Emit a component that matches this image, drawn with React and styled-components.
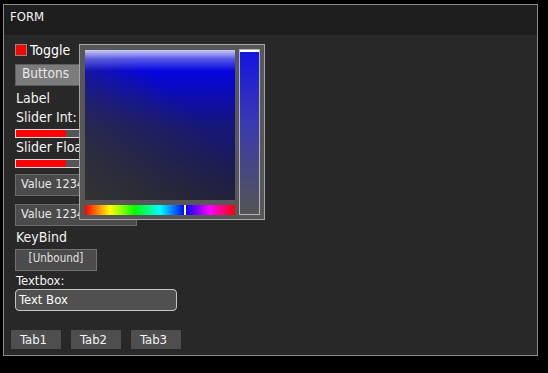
import React from 'react';
import styled, { createGlobalStyle } from 'styled-components';

const GlobalStyle = createGlobalStyle`
  html, body {
    margin: 0;
    background: #000;
  }
  body {
    font-family: "DejaVu Sans Condensed", "DejaVu Sans", sans-serif;
    font-stretch: condensed;
    color: #f0f0f0;
  }
`;

const Window = styled.div`
  position: relative;
  margin: 4px 0 0 3px;
  width: 535px;
  height: 352px;
  box-sizing: border-box;
  border: 1px solid #8c8c8c;
  background: #282828;
  display: flex;
  flex-direction: column;
`;

const TitleBar = styled.div`
  height: 30px;
  line-height: 24px;
  padding-left: 6px;
  background: #1e1e1e;
  font-size: 13px;
  color: #f4f4f4;
`;

const Body = styled.div`
  flex: 1;
  display: flex;
  flex-direction: column;
`;

const Form = styled.div`
  padding: 9px 11px 0;
  display: flex;
  flex-direction: column;
  align-items: flex-start;
`;

const ToggleRow = styled.label`
  display: flex;
  align-items: center;
  gap: 3px;
  height: 12px;
  font-size: 14px;
  line-height: 16px;
  color: #fff;
`;

const Check = styled.span`
  width: 12px;
  height: 12px;
  box-sizing: border-box;
  border: 1px solid #8a8a8a;
  background: ${(p) => (p.on ? '#ff0000' : 'transparent')};
`;

const Button = styled.div`
  margin-top: 8px;
  width: 110px;
  height: 22px;
  box-sizing: border-box;
  padding: 0 6px;
  border: 1px solid #5e5e5e;
  background: #7c7c7c;
  color: #e8e8e8;
  font-size: 13.5px;
  line-height: 17px;
`;

const Label = styled.div`
  margin-top: ${(p) => p.mt}px;
  padding-left: 1px;
  font-size: ${(p) => p.size || 14}px;
  line-height: ${(p) => (p.size === 13 ? 14 : 16)}px;
  color: #f4f4f4;
  white-space: nowrap;
`;

const Slider = styled.div`
  margin-top: 4px;
  width: 122px;
  height: 9px;
  box-sizing: border-box;
  border: 1px solid #dcdcdc;
  background: #555;
  display: flex;
`;

const SliderFill = styled.div`
  background: #ff0000;
  height: 100%;
`;

const Field = styled.div`
  margin-top: ${(p) => p.mt}px;
  width: 122px;
  height: 22px;
  box-sizing: border-box;
  padding: 0 5px;
  border: 1px solid #6c6c6c;
  background: #4b4b4b;
  color: #e8e8e8;
  font-size: 12.5px;
  line-height: 17px;
  white-space: nowrap;
  overflow: hidden;
`;

const KeyButton = styled.div`
  margin-top: 4px;
  width: 82px;
  height: 22px;
  box-sizing: border-box;
  border: 1px solid #707070;
  background: #4b4b4b;
  color: #e0e0e0;
  font-size: 11.5px;
  line-height: 17px;
  text-align: center;
`;

const TextInput = styled.div`
  margin-top: 1px;
  width: 162px;
  height: 22px;
  box-sizing: border-box;
  padding: 0 3px;
  border: 1px solid #c4c4c4;
  border-radius: 4px;
  background: #505050;
  color: #fff;
  font-size: 13px;
  line-height: 20px;
`;

const TabBar = styled.div`
  margin-top: auto;
  padding: 0 7px 6px;
  display: flex;
  gap: 10px;
`;

const Tab = styled.div`
  width: 50px;
  height: 19px;
  box-sizing: border-box;
  padding-left: 9px;
  background: #4e4e4e;
  color: #f4f4f4;
  font-size: 13px;
  line-height: 19px;
`;

const Picker = styled.div`
  position: absolute;
  left: 75px;
  top: 39px;
  box-sizing: border-box;
  width: 186px;
  height: 176px;
  padding: 5px 4px 4px 5px;
  border: 1px solid #a6a6a6;
  background: #575757;
  display: grid;
  grid-template-columns: 150px 21px;
  grid-template-rows: 150px 10px;
  column-gap: 4px;
  row-gap: 5px;
`;

const SVArea = styled.div`
  background:
    linear-gradient(to bottom, rgba(215, 215, 245, 0.95) 0px, rgba(130, 130, 240, 0.65) 9px, rgba(0, 0, 230, 0) 21px),
    linear-gradient(to top right, rgba(51, 51, 51, 1) 0%, rgba(51, 51, 51, 0.45) 35%, rgba(51, 51, 51, 0) 65%),
    linear-gradient(to bottom, #0505e0 14%, #16167a 50%, #1c1c3c 100%);
`;

const HueBar = styled.div`
  position: relative;
  background: linear-gradient(
    to right,
    #ff0000 0%,
    #ffff00 16.67%,
    #00ff00 33.33%,
    #00ffff 50%,
    #0000ff 66.67%,
    #ff00ff 83.33%,
    #ff0000 100%
  );
`;

const HueMarker = styled.div`
  position: absolute;
  top: 0;
  bottom: 0;
  width: 2px;
  background: #fff;
`;

const AlphaBar = styled.div`
  position: relative;
  grid-column: 2;
  grid-row: 1 / span 2;
  margin-top: -1px;
  height: 166px;
  box-sizing: border-box;
  border: 1px solid #b4b4b4;
  background: linear-gradient(to bottom, #1414e2 0%, #3a3ab0 45%, #555 100%);
`;

const AlphaMarker = styled.div`
  position: absolute;
  left: 0;
  right: 0;
  top: 0;
  height: 2px;
  background: #fff;
`;

export default function App() {
  const sliderValue = 50 / 120;
  const hue = 240 / 360;
  return (
    <>
      <GlobalStyle />
      <Window>
        <TitleBar>FORM</TitleBar>
        <Body>
          <Form>
            <ToggleRow>
              <Check on />
              Toggle
            </ToggleRow>
            <Button>Buttons</Button>
            <Label mt={4}>Label</Label>
            <Label mt={3}>Slider Int:</Label>
            <Slider>
              <SliderFill style={{ width: `${sliderValue * 100}%` }} />
            </Slider>
            <Label mt={1}>Slider Float:</Label>
            <Slider>
              <SliderFill style={{ width: `${sliderValue * 100}%` }} />
            </Slider>
            <Field mt={6}>Value 1234</Field>
            <Field mt={8}>Value 1234</Field>
            <Label mt={3}>KeyBind</Label>
            <KeyButton>[Unbound]</KeyButton>
            <Label mt={3} size={13}>Textbox:</Label>
            <TextInput>Text Box</TextInput>
          </Form>
          <TabBar>
            <Tab>Tab1</Tab>
            <Tab>Tab2</Tab>
            <Tab>Tab3</Tab>
          </TabBar>
        </Body>
        <Picker>
          <SVArea />
          <AlphaBar>
            <AlphaMarker />
          </AlphaBar>
          <HueBar>
            <HueMarker style={{ left: `${hue * 150 - 1}px` }} />
          </HueBar>
        </Picker>
      </Window>
    </>
  );
}
